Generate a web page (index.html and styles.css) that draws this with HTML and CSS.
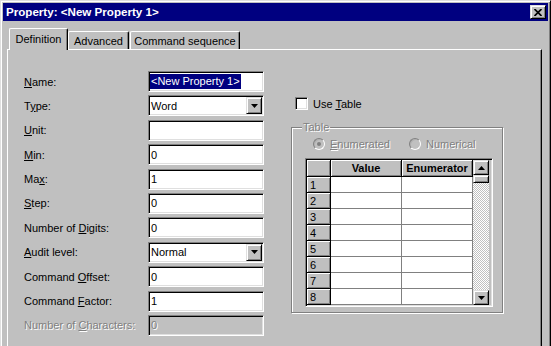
FILE: index.html
```html
<!DOCTYPE html>
<html>
<head>
<meta charset="utf-8">
<title>Property</title>
<link rel="stylesheet" href="styles.css">
</head>
<body>
<div class="window">
  <div class="titlebar">
    <span class="title">Property: &lt;New Property 1&gt;</span>
    <span class="close raised"><svg width="8" height="7" viewBox="0 0 8 7"><path d="M0.5 0L7.5 7M7.5 0L0.5 7" stroke="#000" stroke-width="1.7" fill="none"/></svg></span>
  </div>
  <div class="tabs">
    <div class="tab active">Definition</div>
    <div class="tab tab-adv">Advanced</div>
    <div class="tab tab-cmd">Command sequence</div>
  </div>
  <div class="panel">
    <div class="form">
      <span class="lbl"><u>N</u>ame:</span>
      <div class="field sunken"><span class="sel">&lt;New Property 1&gt;</span></div>
      <span class="lbl">T<u>y</u>pe:</span>
      <div class="field combo sunken"><span class="val">Word</span><span class="cbtn raised"><svg width="7" height="4" viewBox="0 0 7 4"><path d="M0 0H7L3.5 4Z"/></svg></span></div>
      <span class="lbl"><u>U</u>nit:</span>
      <div class="field sunken"></div>
      <span class="lbl"><u>M</u>in:</span>
      <div class="field sunken">0</div>
      <span class="lbl">Ma<u>x</u>:</span>
      <div class="field sunken">1</div>
      <span class="lbl"><u>S</u>tep:</span>
      <div class="field sunken">0</div>
      <span class="lbl">Number of <u>D</u>igits:</span>
      <div class="field sunken">0</div>
      <span class="lbl"><u>A</u>udit level:</span>
      <div class="field combo sunken"><span class="val">Normal</span><span class="cbtn raised"><svg width="7" height="4" viewBox="0 0 7 4"><path d="M0 0H7L3.5 4Z"/></svg></span></div>
      <span class="lbl">Command <u>O</u>ffset:</span>
      <div class="field sunken">0</div>
      <span class="lbl">Command <u>F</u>actor:</span>
      <div class="field sunken">1</div>
      <span class="lbl disabled">Number of <u>C</u>haracters:</span>
      <div class="field sunken field-disabled"><span class="disabled">0</span></div>
    </div>
    <div class="right">
      <div class="check-row"><span class="checkbox sunken"></span><span class="check-text">Use <u>T</u>able</span></div>
      <div class="group">
        <div class="group-title disabled">Table</div>
        <div class="radios">
          <div class="radio-item first"><span class="radio"><span class="dot"></span></span><span class="disabled"><u>E</u>numerated</span></div>
          <div class="radio-item"><span class="radio"></span><span class="disabled">Numerical</span></div>
        </div>
        <div class="grid sunken">
          <table class="sheet">
            <colgroup><col class="c0"><col class="c1"><col class="c2"></colgroup>
            <tr><th class="hd"></th><th class="hd">Value</th><th class="hd">Enumerator</th></tr>
            <tr><th class="rh">1</th><td></td><td></td></tr>
            <tr><th class="rh">2</th><td></td><td></td></tr>
            <tr><th class="rh">3</th><td></td><td></td></tr>
            <tr><th class="rh">4</th><td></td><td></td></tr>
            <tr><th class="rh">5</th><td></td><td></td></tr>
            <tr><th class="rh">6</th><td></td><td></td></tr>
            <tr><th class="rh">7</th><td></td><td></td></tr>
            <tr><th class="rh">8</th><td></td><td></td></tr>
          </table>
          <div class="scrollbar">
            <span class="sbtn raised"><svg width="7" height="4" viewBox="0 0 7 4"><path d="M0 4H7L3.5 0Z"/></svg></span>
            <span class="thumb raised"></span>
            <span class="track"></span>
            <span class="sbtn raised"><svg width="7" height="4" viewBox="0 0 7 4"><path d="M0 0H7L3.5 4Z"/></svg></span>
          </div>
        </div>
      </div>
    </div>
  </div>
</div>
</body>
</html>
```

FILE: styles.css
```css
* { box-sizing: border-box; }
html, body {
  margin: 0;
  width: 551px;
  height: 346px;
  overflow: hidden;
  background: #c0c0c0;
}
body {
  font: 11px/14px "Liberation Sans", Arial, sans-serif;
  color: #000;
}
u { text-decoration: underline; text-underline-offset: 1px; }

.raised {
  background: #c0c0c0;
  border: 1px solid;
  border-color: #dfdfdf #000 #000 #dfdfdf;
  box-shadow: inset 1px 1px #fff, inset -1px -1px #808080;
}
.sunken {
  border: 1px solid;
  border-color: #808080 #fff #fff #808080;
  box-shadow: inset 1px 1px #000, inset -1px -1px #dfdfdf;
}
.disabled {
  color: #808080;
  text-shadow: 1px 1px #fff;
}

.window {
  width: 551px;
  height: 372px;
  display: flex;
  flex-direction: column;
  border: 1px solid;
  border-color: #dfdfdf #000 #000 #dfdfdf;
  box-shadow: inset 1px 1px #fff, inset -1px -1px #808080;
  padding: 2px;
}

.titlebar {
  height: 18px;
  flex: none;
  background: #000080;
  color: #fff;
  display: flex;
  align-items: center;
  padding-left: 3px;
}
.title {
  flex: 1;
  font-weight: bold;
  font-size: 11.6px;
  line-height: 18px;
  white-space: nowrap;
}
.close {
  width: 16px;
  height: 14px;
  margin-right: 2px;
  display: flex;
  align-items: center;
  justify-content: center;
}

.tabs {
  flex: none;
  display: flex;
  align-items: flex-end;
  height: 21px;
  margin-top: 7px;
  margin-left: 6px;
}
.tab {
  background: #c0c0c0;
  border-top: 1px solid #fff;
  border-left: 1px solid #fff;
  border-right: 1px solid #000;
  box-shadow: inset -1px 0 #808080;
  border-radius: 2px 2px 0 0;
  text-align: center;
  white-space: nowrap;
}
.tab.active {
  width: 59px;
  height: 22px;
  margin-bottom: -1px;
  padding-top: 3px;
  position: relative;
  z-index: 1;
}
.tab-adv {
  width: 61px;
  height: 18px;
  padding-top: 2px;
}
.tab-cmd {
  width: 110px;
  height: 18px;
  padding-top: 2px;
  margin-left: 1px;
}

.panel {
  flex: 1;
  width: 535px;
  margin-left: 4px;
  border-top: 1px solid #fff;
  border-left: 1px solid #fff;
  border-right: 1px solid #000;
  box-shadow: inset -1px 0 #808080;
  display: flex;
  align-items: flex-start;
  padding: 21px 0 0 16px;
}

.form {
  display: grid;
  grid-template-columns: 124px 116px;
  grid-auto-rows: 21px;
  row-gap: 3.4px;
  align-items: center;
}
.lbl { white-space: nowrap; }
.field {
  height: 21px;
  background: #fff;
  display: flex;
  align-items: center;
  padding: 0 2px;
  white-space: nowrap;
}
.field-disabled { background: #c0c0c0; }
.sel {
  background: #000080;
  color: #fff;
  line-height: 15px;
  margin-left: -1px;
  padding: 0 1px;
}
.combo { padding: 1px 1px 1px 2px; }
.combo .val { flex: 1; }
.cbtn {
  width: 16px;
  height: 17px;
  display: flex;
  align-items: center;
  justify-content: center;
}
svg { display: block; }

.right {
  margin-left: 27px;
  padding-top: 26px;
}
.check-row {
  display: flex;
  align-items: center;
  height: 13px;
  margin-left: 4px;
}
.checkbox {
  width: 13px;
  height: 13px;
  background: #fff;
}
.check-text { margin-left: 5px; }

.group {
  width: 212px;
  margin-top: 17px;
  border: 1px solid #808080;
  box-shadow: inset 1px 1px #fff, 1px 1px #fff;
  padding-bottom: 5px;
}
.group-title {
  width: fit-content;
  margin: -7px 0 0 10px;
  padding: 0 1px;
  line-height: 13px;
  background: #c0c0c0;
}
.radios {
  display: flex;
  align-items: center;
  height: 13px;
  margin-top: 3px;
  margin-left: 21px;
}
.radio-item {
  display: flex;
  align-items: center;
  gap: 5px;
}
.radio-item.first { width: 96px; }
.radio {
  width: 12px;
  height: 12px;
  border-radius: 50%;
  border: 1px solid;
  border-color: #808080 #fff #fff #808080;
  box-shadow: inset 1px 1px #b0b0b0;
  background: #c0c0c0;
  display: flex;
  align-items: center;
  justify-content: center;
}
.dot {
  width: 4px;
  height: 4px;
  border-radius: 50%;
  background: #808080;
}

.grid {
  width: 188px;
  margin-top: 8px;
  margin-left: 13px;
  padding: 1px 3px 1px 1px;
  display: flex;
  background: #c0c0c0;
}
.sheet {
  border-collapse: separate;
  border-spacing: 0;
  table-layout: fixed;
  width: 166px;
  background: #fff;
}
.c0 { width: 24px; }
.c1 { width: 71px; }
.c2 { width: 71px; }
.sheet th, .sheet td {
  padding: 0;
  height: 16px;
  line-height: 14px;
  font-size: 11px;
}
.sheet td {
  background: #fff;
  border-right: 1px solid #808080;
  border-bottom: 1px solid #808080;
}
.sheet th {
  background: #c0c0c0;
  border-right: 1px solid #000;
  border-bottom: 1px solid #000;
  box-shadow: inset 1px 1px #fff, inset -1px -1px #808080;
}
.sheet th.hd {
  height: 17px;
  font-weight: bold;
  text-align: center;
}
.sheet th.rh {
  font-weight: normal;
  text-align: left;
  padding-left: 3px;
}

.scrollbar {
  width: 16px;
  display: flex;
  flex-direction: column;
  background-color: #fff;
  background-image: conic-gradient(#c0c0c0 25%, #fff 0 50%, #c0c0c0 0 75%, #fff 0);
  background-size: 2px 2px;
}
.sbtn {
  height: 15px;
  display: flex;
  align-items: center;
  justify-content: center;
}
.thumb { height: 8px; }
.track { flex: 1; }
```
